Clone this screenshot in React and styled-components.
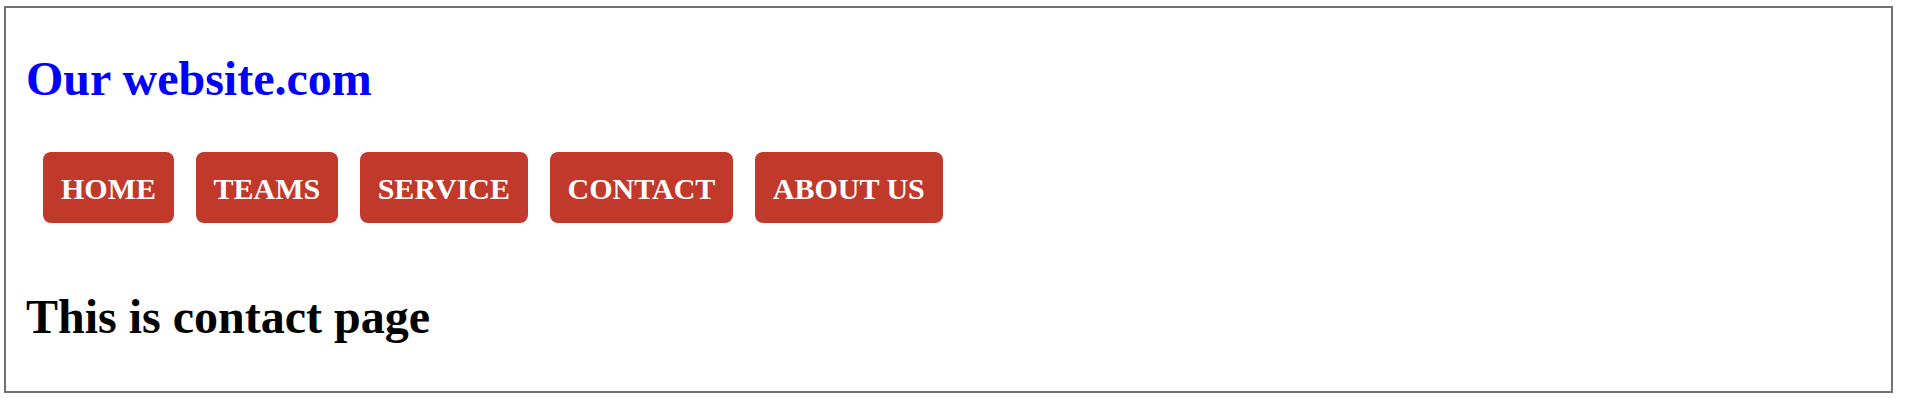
import React from "react";
import styled, { createGlobalStyle } from "styled-components";

// --------------------------------------------------

const GlobalStyle = createGlobalStyle`
	html, body {
		margin: 0;
		padding: 0;
		background: #ffffff;
	}

	body {
		font-family: "Liberation Serif", "Times New Roman", serif;
	}
`;

const Frame = styled.div`
	margin: 6px 12px 0 4px;
	border: 2px solid #717171;
	padding: 44px 20px 48px 20px;
`;

const SiteTitle = styled.h1`
	margin: 0;
	font-size: 48px;
	line-height: 53px;
	font-weight: 700;
	color: #0000ff;
`;

const Nav = styled.nav`
	display: flex;
	gap: 21.5px;
	margin-top: 47px;
	padding-left: 17px;
`;

const NavButton = styled.a`
	display: block;
	padding: 19px 18px 17px;
	border-radius: 8px;
	background-color: #c0392b;
	color: #ffffff;
	font-size: 30px;
	font-weight: 700;
	line-height: 35px;
	text-decoration: none;
	white-space: nowrap;
	cursor: pointer;
`;

const PageHeading = styled.h2`
	margin: 67px 0 0;
	font-size: 48px;
	line-height: 53px;
	font-weight: 700;
	color: #000000;
`;

// --------------------------------------------------

const links = ["HOME", "TEAMS", "SERVICE", "CONTACT", "ABOUT US"];

const App = () =>
	<>
		<GlobalStyle />
		<Frame>
			<SiteTitle>Our website.com</SiteTitle>

			<Nav>
				{links.map(label =>
					<NavButton key={label}>{label}</NavButton>
				)}
			</Nav>

			<PageHeading>This is contact page</PageHeading>
		</Frame>
	</>;

export default App;
